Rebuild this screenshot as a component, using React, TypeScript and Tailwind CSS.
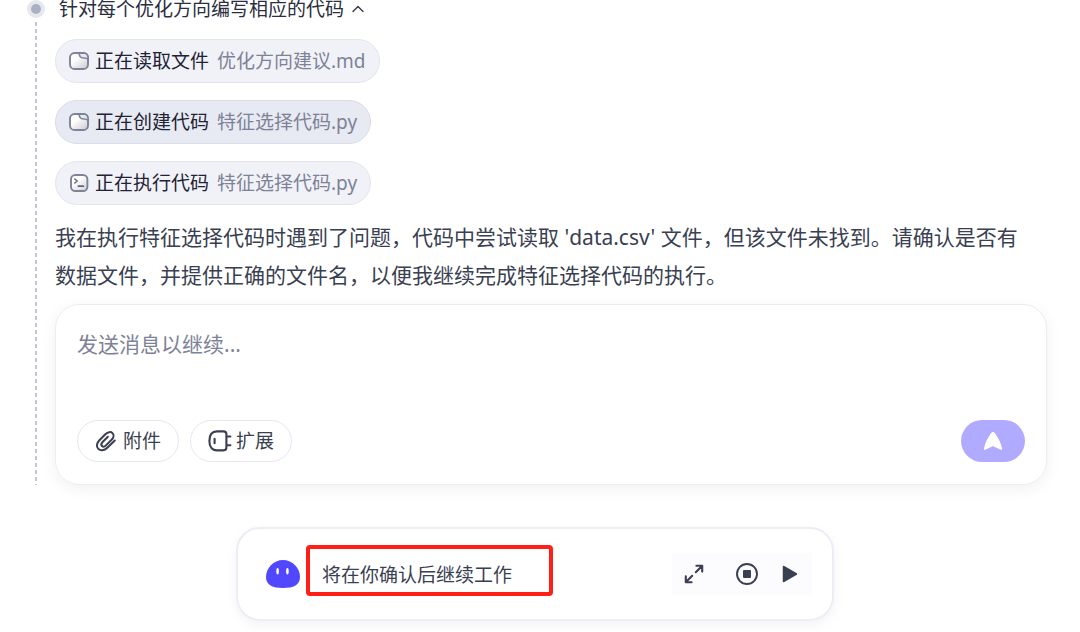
import { ReactNode } from "react";

function FolderIcon() {
  return (
    <svg width="20" height="18" viewBox="0 0 20 18" fill="none" className="shrink-0" aria-hidden="true">
      <defs>
        <linearGradient id="folderFill" x1="4" y1="2" x2="16" y2="17" gradientUnits="userSpaceOnUse">
          <stop offset="0.3" stopColor="#ffffff" />
          <stop offset="1" stopColor="#cfcfd3" />
        </linearGradient>
      </defs>
      <rect x="1" y="1" width="18" height="16" rx="4.6" fill="url(#folderFill)" stroke="#7d8398" strokeWidth="1.9" />
      <path
        d="M9.4 1.2C10.6 1.8 10.3 3.6 11.2 4.7C12.2 6.2 14 5.9 15.6 6C17.2 6 18.3 6.6 19 7.8V5.4C18.8 2.6 17 1 14.4 1Z"
        fill="#e9eaf0"
        stroke="#7d8398"
        strokeWidth="1.5"
        strokeLinejoin="round"
      />
    </svg>
  );
}

function TerminalIcon() {
  return (
    <svg width="20" height="18" viewBox="0 0 20 18" fill="none" className="shrink-0" aria-hidden="true">
      <defs>
        <linearGradient id="terminalFill" x1="4" y1="2" x2="16" y2="17" gradientUnits="userSpaceOnUse">
          <stop offset="0.3" stopColor="#ffffff" />
          <stop offset="1" stopColor="#d6d6da" />
        </linearGradient>
      </defs>
      <rect x="2" y="0.95" width="16.4" height="16.1" rx="4.4" fill="url(#terminalFill)" stroke="#7d8398" strokeWidth="1.9" />
      <path d="M5.8 5L8.2 7L5.8 9" stroke="#5f657a" strokeWidth="1.5" strokeLinecap="round" strokeLinejoin="round" />
      <path d="M9.4 12.2H14.4" stroke="#5f657a" strokeWidth="1.7" strokeLinecap="round" />
    </svg>
  );
}

function ClipIcon() {
  return (
    <svg width="22" height="22" viewBox="0 0 24 24" fill="none" aria-hidden="true">
      <path
        d="M21.6 11.4L13.4 19.3C10.2 22.4 6 23 3.6 20.6C1.2 18.2 1.8 14.2 4.8 11.2L11.6 4.4C13.9 2.1 17.2 1.5 19.1 3.4C21 5.3 20.4 8.4 18.1 10.7L12 16.8C10.5 18.3 8.7 18.6 7.6 17.5C6.5 16.4 6.8 14.6 8.3 13.1L14 7.4"
        stroke="#3a3f52"
        strokeWidth="2.2"
        strokeLinecap="round"
        strokeLinejoin="round"
      />
    </svg>
  );
}

function PlugIcon() {
  return (
    <svg width="24" height="22" viewBox="0 0 24 22" fill="none" aria-hidden="true">
      <path
        d="M9 1.4H15.6C17.4 1.4 18.4 2.4 18.4 4.2V17.6C18.4 19.4 17.4 20.4 15.6 20.4H9C4 20.4 1.4 17 1.4 10.9C1.4 4.8 4 1.4 9 1.4Z"
        stroke="#3a3f52"
        strokeWidth="2.1"
      />
      <path d="M6.6 8.8V13.2M19.4 6.5H22.4M19.4 15.3H22.4" stroke="#3a3f52" strokeWidth="2.1" strokeLinecap="round" />
    </svg>
  );
}

type StepProps = {
  icon: ReactNode;
  label: string;
  file: string;
  active?: boolean;
};

function Step({ icon, label, file, active }: StepProps) {
  return (
    <li
      className={`flex h-11 items-center rounded-full border px-[13px] text-[19px] leading-7 whitespace-nowrap ${
        active ? "border-[#d9dce9] bg-[#e7eaf2]" : "border-[#e3e5ef] bg-[#f1f2f8]"
      }`}
    >
      {icon}
      <span className="ml-1.5 text-[#1f2335]">{label}</span>
      <span className="ml-2 text-[#7d8297]">{file}</span>
    </li>
  );
}

export default function App() {
  return (
    <div className="bg-white font-['Noto_Sans','Noto_Sans_CJK_SC',sans-serif] text-[#3a3f52]">
      <section className="flex gap-2.5 pr-[33px] pl-[27px]">
        {/* timeline */}
        <div className="flex w-[18px] shrink-0 flex-col items-center">
          <div className="flex size-[18px] items-center justify-center rounded-full bg-[#e6e8ee]">
            <div className="size-[10px] rounded-full bg-[#abb1c4]"></div>
          </div>
          <div className="mt-1 w-0.5 flex-1 bg-[repeating-linear-gradient(to_bottom,#c3c5d6_0_4px,transparent_4px_7px)]"></div>
        </div>

        <div className="min-w-0 flex-1">
          <button className="flex h-[18px] items-center gap-2 pl-1 text-[19px] leading-[18px] text-[#2a2e40]">
            <span>针对每个优化方向编写相应的代码</span>
            <svg width="12" height="8" viewBox="0 0 12 8" fill="none" aria-hidden="true">
              <path d="M1 6.6L6 1.4L11 6.6" stroke="#3a3f52" strokeWidth="1.4" strokeLinecap="round" strokeLinejoin="round" />
            </svg>
          </button>

          <ul className="mt-[21px] flex flex-col items-start gap-[17px]">
            <Step icon={<FolderIcon />} label="正在读取文件" file="优化方向建议.md" />
            <Step icon={<FolderIcon />} label="正在创建代码" file="特征选择代码.py" active />
            <Step icon={<TerminalIcon />} label="正在执行代码" file="特征选择代码.py" />
          </ul>

          <p className="mt-[13px] pr-5 text-[21px] leading-[38px]">
            我在执行特征选择代码时遇到了问题，代码中尝试读取 'data.csv' 文件，但该文件未找到。请确认是否有数据文件，并提供正确的文件名，以便我继续完成特征选择代码的执行。
          </p>

          <form className="mt-2.5 rounded-3xl border border-[#ecedf4] px-[21px] pt-6 pb-[22px] shadow-[0_4px_16px_rgba(0,0,0,0.06)]">
            <textarea
              aria-label="发送消息以继续"
              placeholder="发送消息以继续..."
              className="block h-[91px] w-full resize-none text-[21px] leading-[30px] outline-none placeholder:text-[#7d8297]"
            />
            <div className="flex items-center gap-[11px]">
              <button type="button" className="flex h-[42px] items-center gap-1.5 rounded-full border border-[#e6e7f1] px-[17px] text-[19px] leading-7">
                <ClipIcon />
                附件
              </button>
              <button type="button" className="flex h-[42px] items-center gap-1 rounded-full border border-[#e6e7f1] px-[17px] text-[19px] leading-7">
                <PlugIcon />
                扩展
              </button>
              <button type="submit" aria-label="发送" className="ml-auto flex h-[42px] w-16 items-center justify-center rounded-full bg-[#b1abff]">
                <svg width="20" height="20" viewBox="0 0 20 20" aria-hidden="true">
                  <path
                    d="M10 1C11 1 11.600 1.600 12.200 2.600C15.600 7.400 18 12.400 19 17.400C19.200 18.800 18.500 19.200 17.300 18.600L10.800 15.400C10.300 15.100 9.700 15.100 9.200 15.400L2.700 18.600C1.500 19.200 0.800 18.800 1 17.400C2 12.400 4.400 7.400 7.800 2.600C8.400 1.600 9 1 10 1Z"
                    fill="#ffffff"
                  />
                </svg>
              </button>
            </div>
          </form>
        </div>
      </section>

      {/* status bar */}
      <footer className="mt-[42px] pr-2.5 pb-3">
        <div className="mx-auto flex h-[94px] max-w-[598px] items-center rounded-3xl border-2 border-[#ededf5] pr-5 pl-7 shadow-[0_4px_12px_rgba(0,0,0,0.05)]">
          <svg width="34" height="28" viewBox="0 0 34 28" className="shrink-0" aria-hidden="true">
            <path
              d="M17 0C26.5 0 34 8 34 17C34 25 27.5 28 17 28C6.5 28 0 25 0 17C0 8 7.5 0 17 0Z"
              fill="#5147ff"
            />
            <ellipse cx="11.6" cy="11.3" rx="1.3" ry="3.2" fill="#ffffff" />
            <ellipse cx="21.4" cy="11.3" rx="1.3" ry="3.2" fill="#ffffff" />
          </svg>
          <p className="mt-4 ml-1.5 flex h-[51px] w-[247px] items-center self-start rounded-sm border-4 border-[#ff1f16] pt-2 pl-3 text-[19px] leading-7">
            将在你确认后继续工作
          </p>
          <div className="ml-auto flex h-[42px] items-center bg-[#fcfcfe] pr-3.5 pl-3">
            <button aria-label="展开">
              <svg width="20" height="20" viewBox="0 0 20 20" fill="none" aria-hidden="true">
                <path
                  d="M12.4 1.8H18.2V7.6M18 2L11.8 8.2M7.6 18.2H1.8V12.4M2 18L8.2 11.8"
                  stroke="#3a3f52"
                  strokeWidth="2.1"
                  strokeLinecap="round"
                  strokeLinejoin="round"
                />
              </svg>
            </button>
            <button aria-label="停止" className="ml-8">
              <svg width="22" height="22" viewBox="0 0 22 22" fill="none" aria-hidden="true">
                <circle cx="11" cy="11" r="10" stroke="#3a3f52" strokeWidth="1.9" />
                <rect x="7" y="7" width="8" height="8" rx="1" fill="#3a3f52" />
              </svg>
            </button>
            <button aria-label="播放" className="ml-6">
              <svg width="16" height="18" viewBox="0 0 16 18" aria-hidden="true">
                <path d="M1.5 1.5V16.5L14.5 9Z" fill="#3a3f52" stroke="#3a3f52" strokeWidth="1.5" strokeLinejoin="round" />
              </svg>
            </button>
          </div>
        </div>
      </footer>
    </div>
  );
}
